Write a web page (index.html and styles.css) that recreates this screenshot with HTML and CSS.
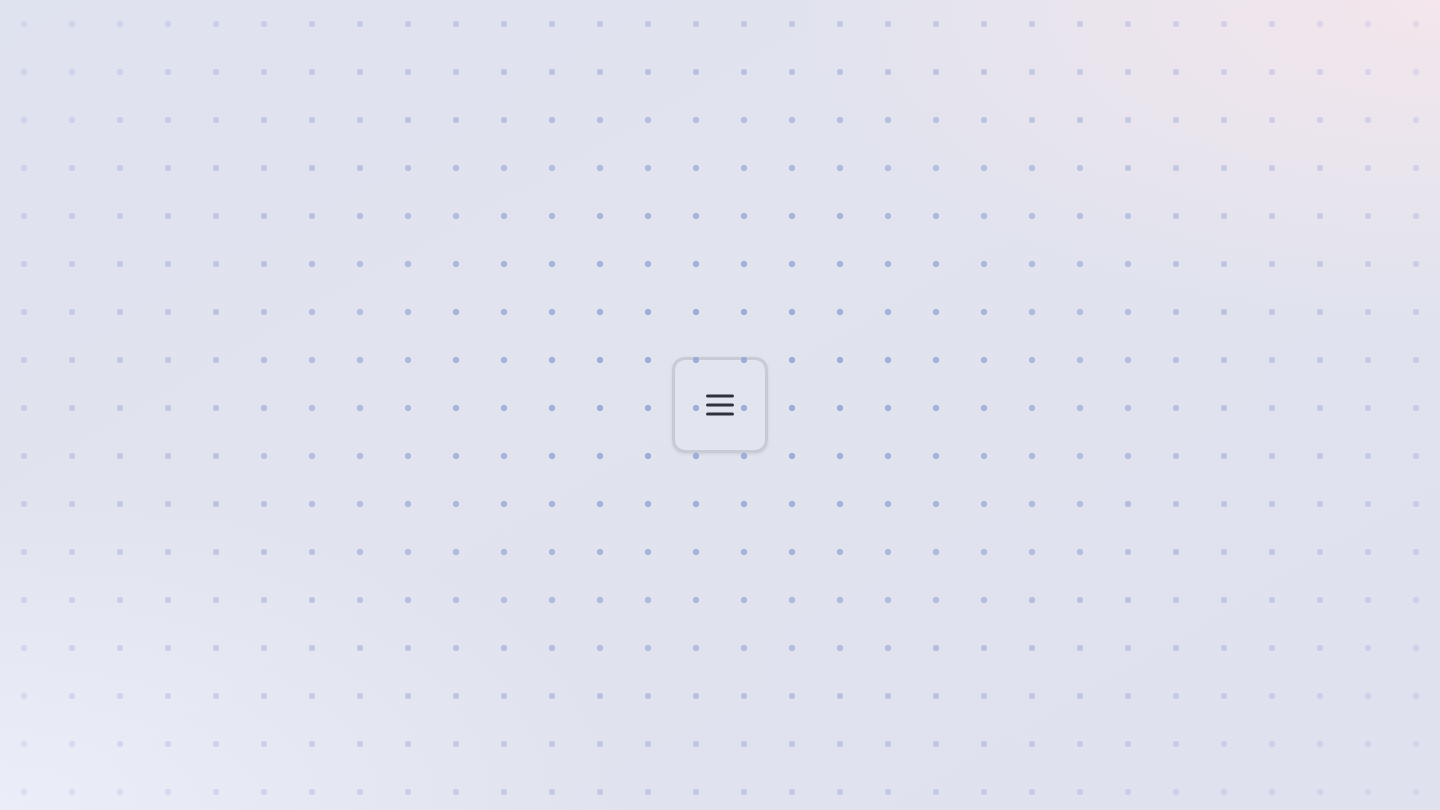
FILE: index.html
```html
<!DOCTYPE html>
<html lang="en">
<head>
<meta charset="utf-8">
<title>Menu</title>
<link rel="stylesheet" href="styles.css">
</head>
<body>
<main class="stage">
  <button class="menu-btn" type="button" aria-label="Open menu">
    <svg class="menu-icon" width="28" height="22" viewBox="0 0 28 22" aria-hidden="true">
      <line x1="1.5" y1="2" x2="26.5" y2="2"/>
      <line x1="1.5" y1="11" x2="26.5" y2="11"/>
      <line x1="1.5" y1="20" x2="26.5" y2="20"/>
    </svg>
  </button>
  <div class="dots" aria-hidden="true"></div>
</main>
</body>
</html>
```
FILE: styles.css
```css
html, body {
  margin: 0;
  height: 100%;
}
body {
  font-family: "Inter", "Liberation Sans", sans-serif;
  background: linear-gradient(150deg, #dfe3ef 0%, #e1e3ee 40%, #e0e3ee 60%, #dfe2ee 100%);
  overflow: hidden;
}
.stage {
  position: relative;
  height: 100vh;
  display: flex;
  align-items: center;
  justify-content: center;
  background:
    radial-gradient(ellipse 45% 40% at 100% 0%, rgba(246, 230, 236, 0.9), rgba(246, 230, 236, 0) 100%),
    radial-gradient(ellipse 45% 40% at 0% 100%, rgba(236, 238, 250, 0.9), rgba(236, 238, 250, 0) 100%);
}
.dots {
  position: absolute;
  inset: 0;
  pointer-events: none;
  background-image: radial-gradient(circle at 24px 24px, rgba(150, 163, 214, 0.85) 2.9px, transparent 3.5px);
  background-size: 48px 48px;
  -webkit-mask-image: radial-gradient(ellipse 62% 72% at 50% 48%, #000 15%, rgba(0,0,0,0.55) 60%, rgba(0,0,0,0.22) 100%);
  mask-image: radial-gradient(ellipse 62% 72% at 50% 48%, #000 15%, rgba(0,0,0,0.55) 60%, rgba(0,0,0,0.22) 100%);
}
.menu-btn {
  width: 96px;
  height: 96px;
  box-sizing: border-box;
  border: 3px solid #c8cad5;
  border-radius: 13px;
  background: rgba(226, 229, 240, 0.6);
  box-shadow: 0 1px 3px rgba(60, 70, 100, 0.12);
  display: flex;
  align-items: center;
  justify-content: center;
  padding: 0;
  cursor: pointer;
}
.menu-icon {
  display: block;
  stroke: #2f323b;
  stroke-width: 3;
  stroke-linecap: round;
}
```
